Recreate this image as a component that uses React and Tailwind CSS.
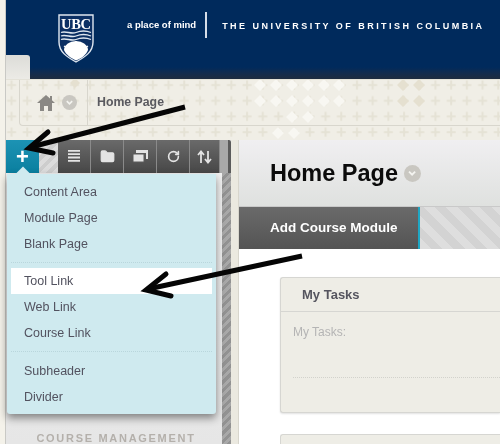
import { Folder, RotateCw } from "lucide-react";

const font = { fontFamily: '"Liberation Sans", Arial, sans-serif' };

// Plus pattern of the breadcrumb band, drawn behind the flow content
function PlusPattern() {
  return (
    <svg className="absolute inset-0 w-full h-full" aria-hidden="true">
      <defs>
        <pattern id="plus" x="13.3" y="-3" width="15.7" height="15.7" patternUnits="userSpaceOnUse">
          <path d="M7 3.500h2v3.500h3.500v2H9v3.500H7V9H3.500V7H7z" fill="#e5e2d5" />
        </pattern>
      </defs>
      <rect width="100%" height="100%" fill="url(#plus)" />
      <g fill="#f8f7f2">
        {[254, 270, 286, 302, 318, 333].map((x) => (
          <path key={x} d={`M${x} -1l6 6-6 6-6-6zM${x} 15l6 6-6 6-6-6z`} />
        ))}
        <path d="M286 31l6 6-6 6-6-6zM302 31l6 6-6 6-6-6zM272 47l6 6-6 6-6-6zM288 47l6 6-6 6-6-6z" />
      </g>
      <path d="M397 -1l6 6-6 6-6-6zM413 -1l6 6-6 6-6-6zM397 15l6 6-6 6-6-6zM413 15l6 6-6 6-6-6z" fill="#e5e0d0" />
      <path d="M69 -2l5 5-5 5-5-5z" fill="#e5e0d0" />
    </svg>
  );
}

function UbcLogo() {
  return (
    <svg width="36" height="49" viewBox="0 0 36 49" className="shrink-0">
      <path d="M1 1h34v27c0 10-8 15-17 20C9 43 1 38 1 28z" fill="#0b2f63" stroke="#dfe7f0" strokeWidth="1.400" />
      <text x="18" y="15" textAnchor="middle" fontSize="14.500" fontWeight="700" textLength="30" fill="#ffffff" fontFamily='"Liberation Serif", serif'>UBC</text>
      <path d="M3 18.500c5-2 10 2 15 0s10-2 15 0M3 22c5-2 10 2 15 0s10-2 15 0M3 25.500c5-2 10 2 15 0s10-2 15 0" fill="none" stroke="#dfe7f0" strokeWidth="1.300" />
      <path d="M6 36a12 9 0 0 1 24 0c-2 5-6 8-12 10.500C13 44 8 41 6 36z" fill="#ffffff" />
      <path d="M18 27v4M11 29l2 3M25 29l-2 3M6 32l3 2M30 32l-3 2" stroke="#ffffff" strokeWidth="1.300" />
    </svg>
  );
}

function Chevron({ size = "w-[15px] h-[15px]", fill = "bg-[#c9c7c1]" }) {
  return (
    <span className={`${size} ${fill} rounded-full flex items-center justify-center shrink-0`}>
      <svg viewBox="0 0 10 10" className="w-3/5 h-3/5">
        <path d="M2 3.500l3 3 3-3" fill="none" stroke="#f4f4f0" strokeWidth="1.800" />
      </svg>
    </span>
  );
}

function ToolButton({ children, width = "w-[33px]" }) {
  return (
    <div className={`${width} h-full flex items-center justify-center border-r border-[#8a8a8a] bg-gradient-to-b from-[#6a6a6a] to-[#474747]`}>
      {children}
    </div>
  );
}

function Toolbar() {
  return (
    <div className="h-[33px] flex bg-[#5b5b5b] rounded-tr-[2px]">
      <div className="w-[33px] h-full bg-gradient-to-b from-[#1c93b4] to-[#0a7f9f] flex items-center justify-center text-white text-[22px] leading-none font-bold">
        +
      </div>
      <div className="w-[19px] h-full bg-[repeating-linear-gradient(135deg,#dcdcdc_0,#dcdcdc_4px,#cdcdcd_4px,#cdcdcd_8px)]" />
      <ToolButton>
        <svg width="12" height="15" viewBox="0 0 12 15" fill="#e4e4e4">
          <path d="M0 1h12v1.800H0zM0 4.300h12v1.800H0zM0 7.600h12v1.800H0zM0 10.900h12v1.800H0z" />
        </svg>
      </ToolButton>
      <ToolButton>
        <Folder size={15} fill="#e4e4e4" color="#e4e4e4" />
      </ToolButton>
      <ToolButton>
        <svg width="16" height="14" viewBox="0 0 16 14" fill="none">
          <path d="M4 0h12v9h-2V3H4z" fill="#e4e4e4" />
          <path d="M1 4h11v8H1z" fill="#e4e4e4" stroke="#5a5a5a" />
        </svg>
      </ToolButton>
      <ToolButton>
        <RotateCw size={13} color="#e4e4e4" strokeWidth={3} />
      </ToolButton>
      <ToolButton width="w-[30px]">
        <svg width="15" height="14" viewBox="0 0 15 14" fill="none" stroke="#e4e4e4" strokeWidth="1.800">
          <path d="M4 13V2M1 5l3-3.500L7 5M11 1v11M8 9l3 3.500L14 9" />
        </svg>
      </ToolButton>
      <div className="w-[8px] h-full bg-[#a9a9a9]" />
    </div>
  );
}

function MenuItem({ label, active }) {
  return (
    <div className={`h-[26px] flex items-center pl-[13px] text-[12.500px] text-[#52525f] ${active ? "bg-white" : ""}`}>
      {label}
    </div>
  );
}

function AddMenu() {
  return (
    <div className="absolute left-[1px] top-[34px] w-[209px] h-[240px] bg-[#cfeaef] rounded-b-[3px] pt-[5px] px-1 shadow-[0_4px_8px_rgba(0,0,0,0.45)]">
      <div className="absolute left-[10px] -top-[5px] w-[12px] h-[12px] rotate-45 bg-[#cfeaef]" />
      <MenuItem label="Content Area" />
      <MenuItem label="Module Page" />
      <MenuItem label="Blank Page" />
      <div className="my-[5px] border-t border-dotted border-[#b9d6dc]" />
      <MenuItem label="Tool Link" active />
      <MenuItem label="Web Link" />
      <MenuItem label="Course Link" />
      <div className="mt-[5px] mb-[6px] border-t border-dotted border-[#b9d6dc]" />
      <MenuItem label="Subheader" />
      <MenuItem label="Divider" />
    </div>
  );
}

function Sidebar() {
  return (
    <aside className="relative w-[225px] shrink-0 flex flex-col bg-gradient-to-b from-[#f3f3f3] to-[#e6e6e6]">
      <Toolbar />
      <div className="flex-1 flex">
        <div className="flex-1 flex flex-col justify-end items-center">
          <p className="text-[11px] font-bold tracking-[0.155em] text-[#b4b0ab] leading-none pl-[4px] whitespace-nowrap">
            COURSE MANAGEMENT
          </p>
        </div>
        <div className="w-[9px] bg-[repeating-linear-gradient(135deg,#a8a8a8_0,#a8a8a8_3px,#929292_3px,#929292_6px)]" />
      </div>
      <AddMenu />
    </aside>
  );
}

function TaskCard() {
  return (
    <div className="ml-[41px] mt-[28px] h-[136px] bg-[#eeede6] border border-[#d6d6d2] border-r-0 rounded-l-[3px] flex flex-col shadow-[0_1px_2px_rgba(0,0,0,0.12)]">
      <div className="h-[34px] flex items-center pl-[21px] border-b border-[#d6d6d2] text-[13px] font-bold text-[#55555f]">
        My Tasks
      </div>
      <div className="pl-3 pt-[12px]">
        <p className="text-[12px] leading-[16px] text-[#b4b4b4]">My Tasks:</p>
        <div className="mt-[37px] border-t border-dotted border-[#d2d2cc]" />
      </div>
    </div>
  );
}

function Content() {
  return (
    <main className="flex-1 min-w-0 flex flex-col bg-white border-l border-[#d8d6cd]">
      <div className="h-[67px] flex items-center pl-[31px] pt-[1px] gap-[6px] bg-gradient-to-b from-[#f0eff1] to-[#dfe1df] border-b border-[#c9c9c9]">
        <h1 className="text-[23.500px] font-bold leading-none text-[#0b0b0b]">Home Page</h1>
        <Chevron size="w-[17px] h-[17px]" />
      </div>
      <div className="h-[42px] flex shrink-0">
        <div className="w-[181px] flex items-center pl-[31px] text-[13.500px] font-bold text-white bg-gradient-to-b from-[#6a6a6a] to-[#545454] border-r-2 border-[#1fa7c4] whitespace-nowrap">
          Add Course Module
        </div>
        <div className="flex-1 bg-[repeating-linear-gradient(45deg,#dedede_0,#dedede_8px,#d3d3d3_8px,#d3d3d3_16px)]" />
      </div>
      <TaskCard />
      <div className="ml-[41px] mt-[21px] flex-1 bg-[#eeede6] border border-[#d6d6d2] border-r-0 border-b-0 rounded-tl-[3px]" />
    </main>
  );
}

function Arrows() {
  return (
    <svg className="absolute inset-0 w-[500px] h-[444px] pointer-events-none" viewBox="0 0 500 444">
      <g fill="none" stroke="#050505" strokeWidth="5">
        <path d="M185 107L31 147" />
        <path d="M48 132L29 148l24 5" strokeLinecap="round" />
        <path d="M302 256L148 289" />
        <path d="M166 274L146 290l25 6" strokeLinecap="round" />
      </g>
    </svg>
  );
}

export default function App() {
  return (
    <div className="relative w-[500px] h-[444px] overflow-hidden flex bg-white blur-[0.5px]" style={font}>
      <div className="w-[6px] shrink-0 bg-[#f4f2ea] border-r border-[#c9c9c5]" />
      <div className="flex-1 min-w-0 flex flex-col">
        <header className="relative h-[79px] shrink-0 flex bg-gradient-to-b from-[#002a5c] from-[85%] to-[#1d2b3f] pl-[52px] pt-[14px] text-white">
          <UbcLogo />
          <div className="flex items-start h-[27px]">
            <span className="ml-[33px] mt-[6px] text-[9.500px] font-bold leading-none whitespace-nowrap">a place of mind</span>
            <span className="ml-[9px] -mt-[2px] w-[2px] h-[26px] bg-[#d5dde8]" />
            <span className="ml-[15px] mt-[8px] text-[9px] font-bold tracking-[0.273em] leading-none whitespace-nowrap">
              THE UNIVERSITY OF BRITISH COLUMBIA
            </span>
          </div>
          <div className="absolute left-0 bottom-0 w-[24px] h-[24px] bg-gradient-to-b from-[#dcdcd8] to-[#ecebe6] rounded-tr-[3px]" />
        </header>
        <div className="relative h-[61px] shrink-0 bg-[#f0eee6] border-t border-[#e4e2d8]">
          <PlusPattern />
          <div className="relative h-[46px] ml-[13px] flex items-center border border-t-0 border-r-0 border-[#d8d6cd] rounded-bl-[4px]">
            <div className="w-[68px] h-full flex items-center justify-end gap-[7px] pr-[10px] border-r border-[#d8d6cd]">
              <svg width="18" height="16" viewBox="0 0 18 16" fill="#8a8884">
                <path d="M9 0L0 8h3v8h4v-5h4v5h4V8h3l-3-2.700V1h-2v2.500z" />
              </svg>
              <Chevron />
            </div>
            <span className="ml-[9px] text-[12.300px] font-bold text-[#5a5a60] whitespace-nowrap">Home Page</span>
          </div>
        </div>
        <div className="flex-1 min-h-0 flex">
          <Sidebar />
          <div className="w-[7px] shrink-0 bg-[#ebe9e0]" />
          <Content />
        </div>
      </div>
      <Arrows />
    </div>
  );
}
